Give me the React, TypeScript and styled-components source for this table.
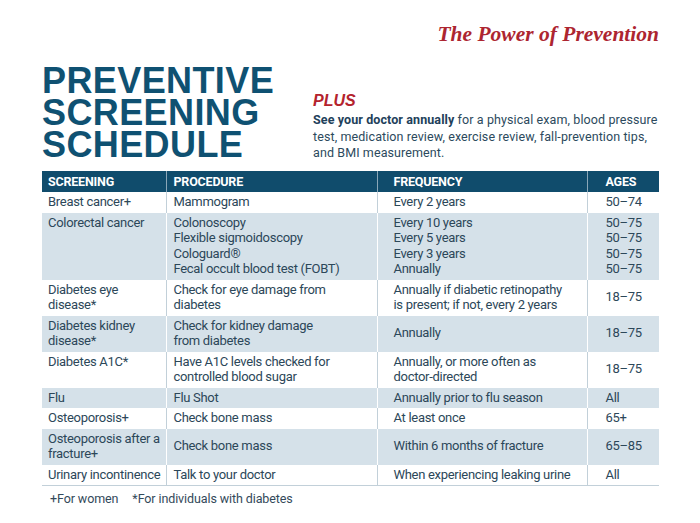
import React from 'react';
import styled, { createGlobalStyle } from 'styled-components';

const BODY = `"Roboto", "Liberation Sans", sans-serif`;

const Global = createGlobalStyle`
  html, body { margin: 0; padding: 0; background: #ffffff; }
  body { font-family: ${BODY}; }
`;

const Page = styled.div`
  width: 700px;
  height: 523px;
  box-sizing: border-box;
  padding: 21px 41px 0 42px;
  display: flex;
  flex-direction: column;
  overflow: hidden;
`;

const TopBar = styled.div`
  display: flex;
  justify-content: flex-end;
`;

const Tagline = styled.div`
  font-family: "Liberation Serif", serif;
  font-style: italic;
  font-weight: bold;
  font-size: 21.5px;
  line-height: 27px;
  color: #ad2530;
`;

const Intro = styled.div`
  display: flex;
  margin-top: 17px;
`;

const Title = styled.h1`
  margin: 0;
  width: 271px;
  font-family: "Liberation Sans", Arial, sans-serif;
  font-weight: bold;
  font-size: 36px;
  line-height: 32px;
  letter-spacing: 0.4px;
  color: #0f5172;
`;

const PlusBlock = styled.div`
  margin-top: 27px;
  flex: 1;
`;

const PlusLabel = styled.div`
  font-family: "Liberation Sans", Arial, sans-serif;
  font-style: italic;
  font-weight: bold;
  font-size: 16px;
  line-height: 18px;
  color: #b4232d;
`;

const PlusText = styled.p`
  margin: 2px 0 0;
  font-size: 12.5px;
  line-height: 16.5px;
  letter-spacing: 0.1px;
  white-space: nowrap;
  color: #2c4a5d;
  b { font-weight: bold; color: #22405a; }
`;

const Table = styled.table`
  margin-top: 9px;
  width: 617px;
  border-collapse: collapse;
  table-layout: fixed;
  font-size: 13px;
  line-height: 15.5px;
  letter-spacing: -0.3px;
  color: #2c4759;
`;

const HeadCell = styled.th<{ $pad: number }>`
  background: #104c6c;
  color: #ffffff;
  font-weight: bold;
  font-size: 12.5px;
  letter-spacing: -0.2px;
  text-align: left;
  text-transform: uppercase;
  padding: 3px 2px 3px ${p => p.$pad}px;
  border-left: 1px solid #8aa7b8;
  &:first-child { border-left: none; }
`;

const Row = styled.tr<{ $shade: boolean }>`
  background: ${p => (p.$shade ? '#d5e1e9' : '#ffffff')};
  &:last-child { border-bottom: 1px solid #c2d0d9; }
`;

const Cell = styled.td<{ $pad: number; $shade: boolean; $top?: boolean }>`
  padding: 2px 2px 3px ${p => p.$pad}px;
  vertical-align: ${p => (p.$top ? 'top' : 'middle')};
  white-space: nowrap;
  border-left: 1px solid ${p => (p.$shade ? '#ffffff' : '#c2d0d9')};
  &:first-child { border-left: none; }
`;

const Footer = styled.div`
  margin-top: 5px;
  padding-left: 8px;
  font-size: 12.5px;
  line-height: 16px;
  letter-spacing: -0.1px;
  color: #33495a;
  span + span { margin-left: 14px; }
`;

type Entry = { screening: string[]; procedure: string[]; frequency: string[]; ages: string[] };

const rows: Entry[] = [
  { screening: ['Breast cancer+'], procedure: ['Mammogram'], frequency: ['Every 2 years'], ages: ['50–74'] },
  {
    screening: ['Colorectal cancer'],
    procedure: ['Colonoscopy', 'Flexible sigmoidoscopy', 'Cologuard®', 'Fecal occult blood test (FOBT)'],
    frequency: ['Every 10 years', 'Every 5 years', 'Every 3 years', 'Annually'],
    ages: ['50–75', '50–75', '50–75', '50–75'],
  },
  {
    screening: ['Diabetes eye', 'disease*'],
    procedure: ['Check for eye damage from', 'diabetes'],
    frequency: ['Annually if diabetic retinopathy', 'is present; if not, every 2 years'],
    ages: ['18–75'],
  },
  {
    screening: ['Diabetes kidney', 'disease*'],
    procedure: ['Check for kidney damage', 'from diabetes'],
    frequency: ['Annually'],
    ages: ['18–75'],
  },
  {
    screening: ['Diabetes A1C*'],
    procedure: ['Have A1C levels checked for', 'controlled blood sugar'],
    frequency: ['Annually, or more often as', 'doctor-directed'],
    ages: ['18–75'],
  },
  { screening: ['Flu'], procedure: ['Flu Shot'], frequency: ['Annually prior to flu season'], ages: ['All'] },
  { screening: ['Osteoporosis+'], procedure: ['Check bone mass'], frequency: ['At least once'], ages: ['65+'] },
  {
    screening: ['Osteoporosis after a', 'fracture+'],
    procedure: ['Check bone mass'],
    frequency: ['Within 6 months of fracture'],
    ages: ['65–85'],
  },
  {
    screening: ['Urinary incontinence'],
    procedure: ['Talk to your doctor'],
    frequency: ['When experiencing leaking urine'],
    ages: ['All'],
  },
];

const Lines = ({ items }: { items: string[] }) => (
  <>
    {items.map((t, i) => (
      <React.Fragment key={i}>
        {i > 0 && <br />}
        {t}
      </React.Fragment>
    ))}
  </>
);

const pads = [6, 7, 16, 18];

export default function App() {
  return (
    <>
      <Global />
      <Page>
        <TopBar>
          <Tagline>The Power of Prevention</Tagline>
        </TopBar>
        <Intro>
          <Title>
            PREVENTIVE
            <br />
            SCREENING
            <br />
            SCHEDULE
          </Title>
          <PlusBlock>
            <PlusLabel>PLUS</PlusLabel>
            <PlusText>
              <b>See your doctor annually</b> for a physical exam, blood pressure
              <br />
              test, medication review, exercise review, fall-prevention tips,
              <br />
              and BMI measurement.
            </PlusText>
          </PlusBlock>
        </Intro>
        <Table>
          <colgroup>
            <col style={{ width: 124 }} />
            <col style={{ width: 211 }} />
            <col style={{ width: 210 }} />
            <col style={{ width: 72 }} />
          </colgroup>
          <thead>
            <tr>
              {['Screening', 'Procedure', 'Frequency', 'Ages'].map((h, i) => (
                <HeadCell key={h} $pad={pads[i]}>
                  {h}
                </HeadCell>
              ))}
            </tr>
          </thead>
          <tbody>
            {rows.map((r, i) => {
              const shade = i % 2 === 1;
              return (
                <Row key={i} $shade={shade}>
                  <Cell $pad={pads[0]} $shade={shade} $top>
                    <Lines items={r.screening} />
                  </Cell>
                  <Cell $pad={pads[1]} $shade={shade}>
                    <Lines items={r.procedure} />
                  </Cell>
                  <Cell $pad={pads[2]} $shade={shade}>
                    <Lines items={r.frequency} />
                  </Cell>
                  <Cell $pad={pads[3]} $shade={shade}>
                    <Lines items={r.ages} />
                  </Cell>
                </Row>
              );
            })}
          </tbody>
        </Table>
        <Footer>
          <span>+For women</span>
          <span>*For individuals with diabetes</span>
        </Footer>
      </Page>
    </>
  );
}
